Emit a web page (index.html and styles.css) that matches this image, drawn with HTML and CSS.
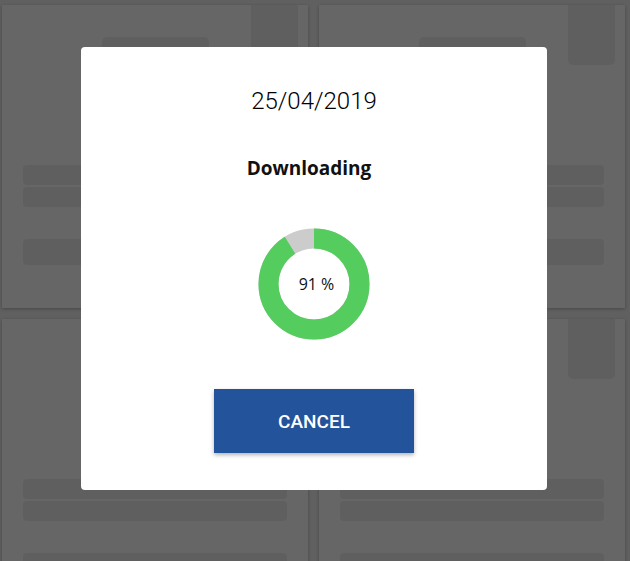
FILE: index.html
```html
<!DOCTYPE html>
<html lang="en">
<head>
<meta charset="utf-8">
<title>Downloading</title>
<link rel="stylesheet" href="styles.css">
</head>
<body>
  <main class="grid">
    <div class="card">
      <div class="badge"></div>
      <div class="thumb"></div>
      <div class="bar"></div>
      <div class="bar bar-second"></div>
      <div class="bar bar-tall"></div>
    </div>
    <div class="card">
      <div class="badge"></div>
      <div class="thumb"></div>
      <div class="bar"></div>
      <div class="bar bar-second"></div>
      <div class="bar bar-tall"></div>
    </div>
    <div class="card">
      <div class="badge"></div>
      <div class="thumb"></div>
      <div class="bar"></div>
      <div class="bar bar-second"></div>
      <div class="bar bar-tall"></div>
    </div>
    <div class="card">
      <div class="badge"></div>
      <div class="thumb"></div>
      <div class="bar"></div>
      <div class="bar bar-second"></div>
      <div class="bar bar-tall"></div>
    </div>
  </main>

  <div class="overlay">
    <div class="dialog">
      <div class="date">25/04/2019</div>
      <div class="status">Downloading</div>
      <div class="donut">
        <svg width="112" height="112" viewBox="0 0 112 112">
          <circle cx="56" cy="56" r="45.5" fill="none" stroke="#cccccc" stroke-width="20"/>
          <circle cx="56" cy="56" r="45.5" fill="none" stroke="#54cc5e" stroke-width="20"
                  stroke-dasharray="260.2 400" transform="rotate(-90 56 56)"/>
        </svg>
        <span class="percent">91 %</span>
      </div>
      <button class="cancel">Cancel</button>
    </div>
  </div>
</body>
</html>
```

FILE: styles.css
```css
html, body {
  margin: 0;
  padding: 0;
}

body {
  background: #efefef;
  width: 630px;
  height: 561px;
  overflow: hidden;
  font-family: Roboto, "Liberation Sans", sans-serif;
}

.grid {
  display: grid;
  grid-template-columns: 306px 306px;
  grid-auto-rows: 303px;
  gap: 11px;
  padding: 5px 0 0 2px;
}

.card {
  background: #ffffff;
  box-shadow: 0 1px 3px rgba(0, 0, 0, 0.25);
  display: flex;
  flex-direction: column;
  padding: 0 21px;
  position: relative;
}

.badge {
  position: absolute;
  top: 0;
  right: 10px;
  width: 47px;
  height: 60px;
  background: #eeeeee;
  border-radius: 0 0 5px 5px;
}

.thumb {
  align-self: center;
  width: 107px;
  height: 110px;
  margin-top: 32px;
  background: #eeeeee;
  border-radius: 5px;
}

.bar {
  height: 20px;
  background: #eeeeee;
  border-radius: 4px;
  margin-top: 18px;
}

.bar-second {
  margin-top: 2px;
}

.bar-tall {
  height: 26px;
  margin-top: 32px;
}

.overlay {
  position: fixed;
  inset: 0;
  background: rgba(0, 0, 0, 0.6);
  display: flex;
  justify-content: center;
  align-items: flex-start;
}

.dialog {
  margin-top: 47px;
  margin-right: 2px;
  width: 466px;
  height: 443px;
  box-sizing: border-box;
  background: #ffffff;
  border-radius: 4px;
  display: flex;
  flex-direction: column;
  align-items: center;
  padding-top: 40px;
}

.date {
  font-family: Roboto, sans-serif;
  font-weight: 300;
  font-size: 24px;
  line-height: 28px;
  color: #000000;
}

.status {
  margin-top: 41px;
  padding-right: 10px;
  font-family: "Open Sans", sans-serif;
  font-weight: 700;
  font-size: 19px;
  line-height: 24px;
  color: #111111;
}

.donut {
  margin-top: 48px;
  width: 112px;
  height: 112px;
  position: relative;
}

.donut svg {
  display: block;
}

.percent {
  position: absolute;
  inset: 0;
  padding-left: 5px;
  display: flex;
  align-items: center;
  justify-content: center;
  font-family: "Open Sans", sans-serif;
  font-size: 16px;
  color: #111111;
}

.cancel {
  margin-top: 49px;
  width: 200px;
  height: 64px;
  border: none;
  border-radius: 0;
  background: #23539a;
  color: #ffffff;
  font-family: Roboto, sans-serif;
  font-weight: 500;
  font-size: 19px;
  text-transform: uppercase;
  box-shadow: 0 2px 4px rgba(0, 0, 0, 0.3);
  padding: 0;
}
```
